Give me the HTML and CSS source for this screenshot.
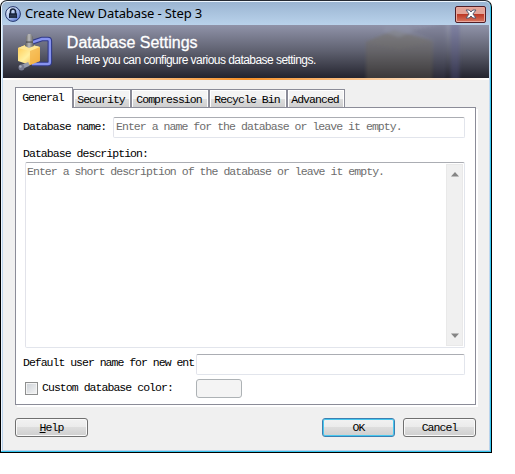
FILE: index.html
```html
<!DOCTYPE html>
<html lang="en">
<head>
<meta charset="utf-8">
<title>Create New Database</title>
<link rel="stylesheet" href="styles.css">
</head>
<body>
<main class="window">
  <header class="titlebar">
    <svg class="lock" width="16" height="16" viewBox="0 0 16 16">
      <defs><linearGradient id="lk" x2="1" y2="1"><stop offset="0" stop-color="#fff"/><stop offset=".5" stop-color="#a9c0ec"/><stop offset="1" stop-color="#4968cf"/></linearGradient></defs>
      <circle cx="8" cy="8" r="7.4" fill="url(#lk)" stroke="#24366d"/>
      <path d="M5.500 8V5.500a2.500 2.500 0 0 1 5 0V8" fill="none" stroke="#17243d" stroke-width="1.600"/>
      <path d="M4 7.300h8V12H4z" fill="#17243d"/><path d="M5 9.300h6M5 11h6" stroke="#46546e" stroke-width=".6"/>
    </svg>
    <h1 class="caption">Create New Database - Step 3</h1>
    <button class="close" aria-label="Close">
      <svg width="12" height="10" viewBox="0 0 12 10"><path d="M1 1h3.200L6 3l1.800-2H11L7.900 5 11 9H7.800L6 7 4.200 9H1l3.100-4z" fill="#fff" stroke="#545a70"/></svg>
    </button>
  </header>
  <section class="banner">
    <svg class="vise" width="36" height="40" viewBox="0 0 36 40">
      <defs>
        <linearGradient id="gold" x2="1" y2="1"><stop offset="0" stop-color="#ffc74c"/><stop offset=".5" stop-color="#fff0a0"/><stop offset="1" stop-color="#f5a72e"/></linearGradient>
        <linearGradient id="gray"><stop offset="0" stop-color="#555"/><stop offset=".45" stop-color="#bbb"/><stop offset="1" stop-color="#555"/></linearGradient>
      </defs>
      <path d="M13 10 25 6h6q2 0 2 2v21q0 2-2 2H15" fill="none" stroke="#303986" stroke-width="4.600"/>
      <path d="M13 10 25 6h6q2 0 2 2v21q0 2-2 2H15" fill="none" stroke="#8793ef" stroke-width="2.400"/>
      <path d="M1 15 11 11l12 3v14l-10 4-12-4z" fill="url(#gold)"/>
      <path d="M1 15 11 11l12 3-10 4z" fill="#ffe795"/>
      <path d="M13 18 23 14v14l-10 4z" fill="#f3b044" opacity=".75"/>
      <path d="m8 13 1-4V4l2-3h3l2 3v5l1 4-5 2z" fill="url(#gray)"/><path d="M9 9h7" stroke="#444"/>
      <path d="m5 34 7-3" stroke="#969bac" stroke-width="4"/><circle cx="4.500" cy="34.500" r="3" fill="#777b91"/><circle cx="3.500" cy="33.500" r="1.200" fill="#b0b4c2"/>
    </svg>
    <div class="heading"><h2>Database Settings</h2><p>Here you can configure various database settings.</p></div>
    <svg class="ghost" width="126" height="53" viewBox="0 0 126 53">
      <defs><filter id="soft"><feGaussianBlur stdDeviation="1.500"/></filter></defs>
      <g filter="url(#soft)"><path d="M2 17 30 5l39 11v40H2z" fill="#716a55" opacity=".3"/><path d="M2 17 30 5l39 11-33 9z" fill="#817868" opacity=".15"/><path d="M20-4h24l4 11-13 5-15-5z" fill="#9296ab" opacity=".4"/><path d="M48 6 82-2v58H70V15z" fill="#53536f" opacity=".18"/><path d="M87-3h9v60h-9z" fill="#5c5c94" opacity=".3"/></g>
    </svg>
  </section>
  <div class="rule"></div>
  <section class="body">
    <nav class="tabs">
      <button class="tab active">General</button><button class="tab">Security</button><button class="tab wide">Compression</button><button class="tab wide">Recycle Bin</button><button class="tab">Advanced</button>
    </nav>
    <div class="panel">
      <div class="row name"><span>Database name:</span><div class="field">Enter a name for the database or leave it empty.</div></div>
      <div class="label">Database description:</div>
      <div class="field area"><span>Enter a short description of the database or leave it empty.</span>
        <div class="scroll"><svg width="8" height="5" viewBox="0 0 8 5"><path d="M0 4.500 4 0l4 4.500z" fill="#858585"/></svg><svg width="8" height="5" viewBox="0 0 8 5"><path d="M0 .5h8L4 5z" fill="#858585"/></svg></div>
      </div>
      <div class="row user"><span class="userlabel">Default user name for new ent</span><div class="field"></div></div>
      <div class="row color"><i class="check"></i><span class="colorlabel">Custom database color:</span><i class="swatch"></i></div>
    </div>
    <footer class="actions"><button class="btn"><u>H</u>elp</button><button class="btn ok">OK</button><button class="btn">Cancel</button></footer>
  </section>
</main>
</body>
</html>
```
FILE: styles.css
```css
* { box-sizing: border-box; }
body { margin: 0; background: #fff; overflow: hidden; }
h1, h2, p { margin: 0; font-weight: normal; }
button { margin: 0; padding: 0; color: #000; font: inherit; letter-spacing: inherit; }
.window {
  width: 492px; height: 453px; padding: 1px 1px 0;
  border: 1px solid #000; border-top-color: #252a32; border-radius: 7px 7px 0 0;
  background: linear-gradient(#c5dcf2, #b9d1ea);
  box-shadow: inset -1px -1px #35c5ee, inset 1px 1px #edf6ff;
  font: 11.5px/12px "Liberation Mono", monospace; letter-spacing: -0.95px; white-space: nowrap;
}
.titlebar {
  display: flex; align-items: center; height: 23px; padding: 0 4px 0 3px;
  border-radius: 5px 5px 0 0; background: linear-gradient(#9bb5d2, #b9d2eb);
}
.caption { flex: 1; margin: -1px 0 0 4px; font: 13px/20px "Noto Sans", sans-serif; letter-spacing: -.12px; }
.close {
  display: flex; align-items: center; justify-content: center; width: 31px; height: 17px; margin-top: 1px;
  border: 1px solid #501e27; border-radius: 2px; box-shadow: inset 0 0 0 1px #eaa89d;
  background: linear-gradient(#e3a397 0 45%, #bd3926 50%, #d77861);
}
.banner {
  display: flex; width: 486px; height: 53px; margin-left: 1px;
  background: linear-gradient(#9093a9, #5e606f 50%, #24242e);
}
.vise { margin: 8px 0 0 14px; }
.heading { width: 306px; margin-left: 14px; color: #fff; }
.heading h2 { margin-top: 8px; font: 16px/20px "Liberation Sans", sans-serif; letter-spacing: 0; -webkit-text-stroke: .3px #fff; }
.heading p { margin: 0 0 0 9px; font: 12px/15px "Liberation Sans", sans-serif; letter-spacing: -.55px; }
.ghost { margin-left: -8px; }
.rule { width: 486px; height: 2px; margin-left: 1px; background: linear-gradient(90deg, #fff, #f79027 50%, #fff); }
.body { width: 486px; height: 370px; margin-left: 1px; padding: 7px 12px 0; background: #f0f0f0; }
.tabs { display: flex; align-items: flex-end; height: 20px; }
.tab {
  width: 58px; height: 18px; border: 1px solid #8b8c98; border-bottom: 0; padding: 2px 2px 0 0;
  background: linear-gradient(#f4f4f4 0 50%, #dedede 52%, #cfcfcf); box-shadow: inset 1px 1px #fff, inset -1px 0 #fff;
}
.tab.wide { width: 78px; }
.tab.active { position: relative; height: 21px; margin-bottom: -1px; padding: 0 2px 1px 0; background: #fff; }
.panel {
  width: 461px; height: 298px; padding: 9px; border: 1px solid #8b8c98; background: #fff; box-shadow: 2px 2px #fff;
}
.row { display: flex; }
.field { border: 1px solid #e2e5ec; border-top-color: #abadb3; border-left-color: #e2e3ea; border-radius: 2px; background: #fff; color: #6d6d6d; }
.name span { width: 90px; padding-top: 4px; margin-left: -2px; }
.name .field { width: 352px; height: 21px; padding: 3px 2px; }
.label { height: 12px; margin: 10px 0 2px -2px; }
.area { display: flex; justify-content: space-between; width: 440px; height: 186px; padding: 1px; }
.area > span { padding: 2px 0 0; }
.scroll {
  display: flex; flex-direction: column; align-items: center; justify-content: space-between;
  width: 17px; padding: 7px 0; border: 1px solid #e9e9e9; background: #f0f0f0;
}
.user { margin-top: 6px; }
.userlabel { width: 173px; margin-left: -2px; padding-top: 3px; letter-spacing: -1px; }
.user .field { width: 269px; height: 21px; }
.color { margin-top: 4px; }
.check { width: 13px; height: 13px; margin-top: 3px; border: 1px solid #8e8f8f; background: linear-gradient(135deg, #cbd0d6, #f5f5f5); box-shadow: inset 0 0 0 1px #f4f4f4; }
.colorlabel { width: 154px; margin-left: 4px; padding-top: 3px; }
.swatch { width: 46px; height: 19px; border: 1px solid #adb2b5; border-radius: 3px; background: #f4f4f4; }
.actions { display: flex; gap: 8px; margin-top: 13px; width: 461px; }
.btn {
  width: 73px; height: 19px; border: 1px solid #707070; border-radius: 3px; box-shadow: inset 0 0 0 1px #fafafa;
  background: linear-gradient(#f2f2f2 0, #ebebeb 48%, #dddddd 50%, #cfcfcf);
}
.btn:first-child { margin-right: auto; }
.btn.ok { border-color: #3c7fb1; box-shadow: inset 0 0 0 1px #48c8ef; }
```
